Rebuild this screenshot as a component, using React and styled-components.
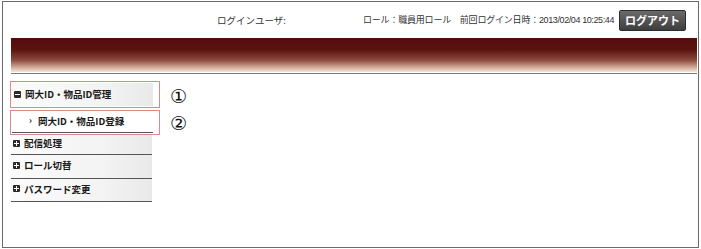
import React from 'react';
import styled, { createGlobalStyle } from 'styled-components';

const GlobalStyle = createGlobalStyle`
  html, body {
    margin: 0;
    padding: 0;
    background: #fff;
  }
  body {
    font-family: "Noto Sans CJK JP", "Liberation Sans", sans-serif;
    color: #222;
  }
`;

const Frame = styled.div`
  box-sizing: border-box;
  margin: 1px 0 0 2px;
  width: 697px;
  height: 247px;
  border: 1px solid #6a6a6a;
  padding: 0 1px 0 8px;
`;

const Header = styled.div`
  height: 35px;
  display: flex;
  align-items: center;
  padding-right: 11px;
  font-size: 9px;
  color: #333;
`;

const UserLabel = styled.span`
  margin-left: 206px;
  margin-right: auto;
  font-size: 9.5px;
  white-space: nowrap;
`;

const Info = styled.span`
  white-space: nowrap;
  letter-spacing: -0.2px;
`;

const Num = styled.span`
  font-family: "Liberation Sans", sans-serif;
  font-size: 9px;
  letter-spacing: -0.4px;
`;

const LogoutButton = styled.button`
  margin-left: 5px;
  width: 67px;
  height: 21px;
  margin-top: 1px;
  border: 1px solid #2c2c2c;
  border-radius: 2px;
  background: linear-gradient(#6a6a6a, #3e3e3e);
  color: #fff;
  font-family: "Noto Sans CJK JP", sans-serif;
  font-size: 11px;
  font-weight: bold;
  padding: 0;
  cursor: pointer;
`;

const Banner = styled.div`
  margin-top: 1px;
  height: 34px;
  background: linear-gradient(#540b0a 0%, #5c1410 35%, #8c4a3c 65%, #d8b2a0 88%, #f6e4d8 100%);
  border-bottom: 1px solid #fff;
  box-shadow: 0 1px 0 #7a7a7a;
`;

const Body = styled.div`
  margin-top: 8px;
  display: flex;
  flex-direction: column;
`;

const Row = styled.div`
  display: flex;
  align-items: center;
`;

const Mark = styled.div`
  box-sizing: border-box;
  width: 150px;
  margin-left: -1px;
  border: 1px solid #d88a8a;
  padding: 1px 6px 1px 1px;
  margin-bottom: ${(p) => p.$gap || 0}px;
`;

const Circled = styled.span`
  margin-left: 10px;
  margin-top: 2px;
  font-family: "DejaVu Sans", sans-serif;
  font-size: 19px;
  color: #111;
  line-height: 1;
`;

const Item = styled.div`
  box-sizing: border-box;
  width: 141px;
  height: ${(p) => p.$h || 23}px;
  display: flex;
  align-items: center;
  padding-left: ${(p) => (p.$sub ? 17 : 2)}px;
  padding-bottom: ${(p) => (p.$line ? 3 : 0)}px;
  font-size: 9.5px;
  font-weight: bold;
  color: #1a1a1a;
  white-space: nowrap;
  background: ${(p) => (p.$sub ? '#fff' : 'linear-gradient(90deg, #fbfbfb 0%, #f3f3f3 65%, #e9e9e9 100%)')};
  border-bottom: 1px solid ${(p) => (p.$line ? '#555' : 'transparent')};
`;

const Box = styled.span`
  position: relative;
  display: inline-block;
  width: 7px;
  height: 7px;
  margin-right: 4px;
  background: #2a2a2a;
  border-radius: 1px;
  &::before,
  &::after {
    content: '';
    position: absolute;
    background: #fff;
  }
  &::before {
    left: 1px;
    top: 3px;
    width: 5px;
    height: 1px;
  }
  &::after {
    display: ${(p) => (p.$plus ? 'block' : 'none')};
    left: 3px;
    top: 1px;
    width: 1px;
    height: 5px;
  }
`;

const Chevron = styled.span`
  font-size: 9px;
  margin-right: 6px;
`;

const App = () => (
  <>
    <GlobalStyle />
    <Frame>
      <Header>
        <UserLabel>ログインユーザ:</UserLabel>
        <Info>
          ロール：職員用ロール　前回ログイン日時：<Num>2013/02/04 10:25:44</Num>
        </Info>
        <LogoutButton>ログアウト</LogoutButton>
      </Header>
      <Banner />
      <Body>
        <Row>
          <Mark $gap={2}>
            <Item $h={23}>
              <Box />
              岡大ID・物品ID管理
            </Item>
          </Mark>
          <Circled>①</Circled>
        </Row>
        <Row>
          <Mark>
            <Item $sub $line $h={21}>
              <Chevron>›</Chevron>
              岡大ID・物品ID登録
            </Item>
          </Mark>
          <Circled>②</Circled>
        </Row>
        <Item $line $h={20}>
          <Box $plus />
          配信処理
        </Item>
        <Item $line $h={24}>
          <Box $plus />
          ロール切替
        </Item>
        <Item $line $h={23}>
          <Box $plus />
          パスワード変更
        </Item>
      </Body>
    </Frame>
  </>
);

export default App;
